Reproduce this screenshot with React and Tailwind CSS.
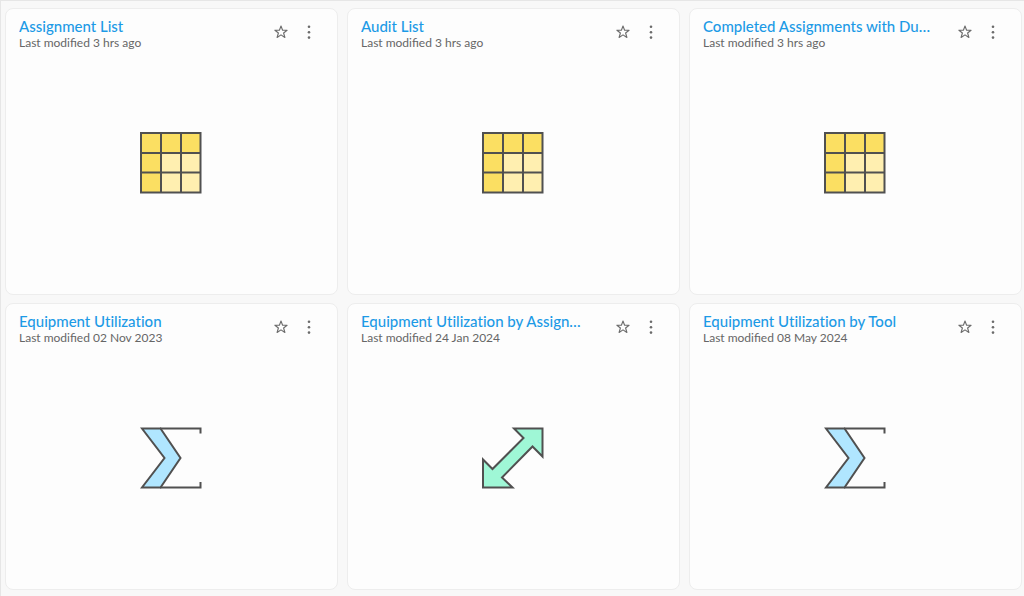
import { useState } from "react";

const REPORTS = [
  { id: 1, title: "Assignment List", modified: "3 hrs ago", type: "table" },
  { id: 2, title: "Audit List", modified: "3 hrs ago", type: "table" },
  { id: 3, title: "Completed Assignments with Du…", modified: "3 hrs ago", type: "table" },
  { id: 4, title: "Equipment Utilization", modified: "02 Nov 2023", type: "summary" },
  { id: 5, title: "Equipment Utilization by Assign…", modified: "24 Jan 2024", type: "matrix" },
  { id: 6, title: "Equipment Utilization by Tool", modified: "08 May 2024", type: "summary" },
];

function TableIcon() {
  return (
    <svg viewBox="0 0 62 62" className="size-[62px]" aria-hidden="true">
      <path d="M1 1h60v60H1z" fill="#fbdf62" />
      <path d="M21 21h40v40H21z" fill="#ffefb0" />
      <path
        d="M1 1h59.500v59.500H1zM21 1v59.500M41 1v59.500M1 21h59.500M1 40.500h59.500"
        fill="none"
        stroke="#505050"
        strokeWidth="2"
      />
    </svg>
  );
}

function SummaryIcon() {
  return (
    <svg viewBox="0 0 62 62" className="size-[62px]" aria-hidden="true">
      <g stroke="#505050" strokeWidth="2">
        <path d="M2 1.500H20.500L40.500 31L20.500 60.500H2L24.500 31Z" fill="#b0e6ff" />
        <path d="M20 1.500H60.500V6.500M20 60.500H60.500V55" fill="none" />
      </g>
    </svg>
  );
}

function MatrixIcon() {
  return (
    <svg viewBox="0 0 62 62" className="size-[62px]" aria-hidden="true">
      <path
        d="M32 1.500H60.500V29.500L50.500 19.500L20 50.500L30.500 60.500H1V32.500L10.500 42L41.500 11Z"
        fill="#9ff7d6"
        stroke="#505050"
        strokeWidth="2"
      />
    </svg>
  );
}

const ICONS = {
  table: TableIcon,
  summary: SummaryIcon,
  matrix: MatrixIcon,
};

function ReportCard({ report }) {
  const [starred, setStarred] = useState(false);
  const Icon = ICONS[report.type];

  return (
    <article className="flex h-[287px] min-w-0 flex-col rounded-lg border border-[#ededed] bg-[#fdfdfd]">
      <header className="flex items-start justify-between pt-2 pr-3.5 pl-[13px]">
        <div className="min-w-0 flex-1">
          <h2 className="truncate text-[15px] leading-[18px] font-medium text-[#1c9ae6] [font-variant-ligatures:none]">
            <a href="#report" className="hover:underline">
              {report.title}
            </a>
          </h2>
          <p className="truncate text-xs leading-4 text-[#666666]">
            Last modified {report.modified}
          </p>
        </div>
        <div className="flex shrink-0 pt-px">
          <button
            type="button"
            aria-label="Favorite"
            aria-pressed={starred}
            onClick={() => setStarred(!starred)}
            className="flex size-7 items-center justify-center text-[#6b6b6b]"
          >
            <svg viewBox="0 0 14 14" className="size-3.5" aria-hidden="true">
              <path
                d="M7 1L8.600 5.200H13.100L9.600 8L10.900 12.500L7 9.900L3.100 12.500L4.400 8L0.900 5.200H5.400Z"
                fill={starred ? "currentColor" : "none"}
                stroke="currentColor"
                strokeWidth="1.100"
                strokeLinejoin="round"
              />
            </svg>
          </button>
          <button
            type="button"
            aria-label="More options"
            className="flex size-7 items-center justify-center text-[#6b6b6b]"
          >
            <svg viewBox="0 0 14 14" className="size-3.5" fill="currentColor" aria-hidden="true">
              <circle cx="7" cy="1.800" r="1.300" />
              <circle cx="7" cy="7.300" r="1.300" />
              <circle cx="7" cy="12.600" r="1.300" />
            </svg>
          </button>
        </div>
      </header>
      <div className="flex flex-1 items-center justify-center pr-0.5 pb-5">
        <Icon />
      </div>
    </article>
  );
}

export default function App() {
  return (
    <main className="min-h-screen border-t border-l border-[#e6e6e6] bg-[#f8f8f8] font-[Lato,sans-serif]">
      <div className="grid grid-cols-3 gap-x-[9px] gap-y-2 pt-[7px] pr-0.5 pb-1 pl-1">
        {REPORTS.map((report) => (
          <ReportCard key={report.id} report={report} />
        ))}
      </div>
    </main>
  );
}
